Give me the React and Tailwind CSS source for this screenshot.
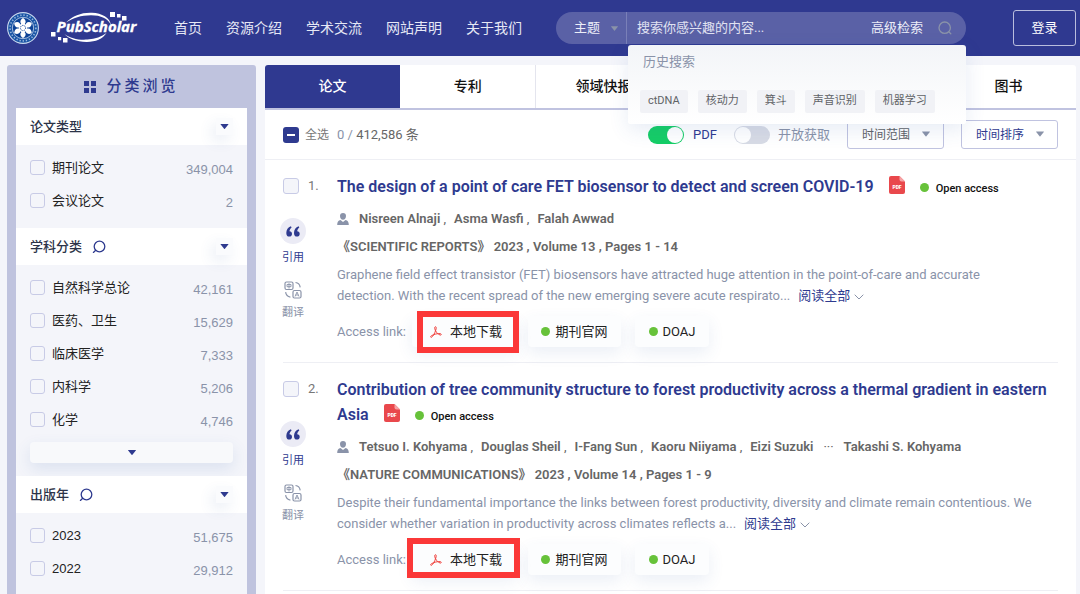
import React from "react";

const NAV = ["首页", "资源介绍", "学术交流", "网站声明", "关于我们"];
const HISTORY = ["ctDNA", "核动力", "箕斗", "声音识别", "机器学习"];

const SECTIONS = [
  { title: "论文类型", items: [["期刊论文", "349,004"], ["会议论文", "2"]] },
  {
    title: "学科分类",
    search: true,
    more: true,
    items: [
      ["自然科学总论", "42,161"],
      ["医药、卫生", "15,629"],
      ["临床医学", "7,333"],
      ["内科学", "5,206"],
      ["化学", "4,746"],
    ],
  },
  { title: "出版年", search: true, items: [["2023", "51,675"], ["2022", "29,912"]] },
];

const PAPERS = [
  {
    title: "The design of a point of care FET biosensor to detect and screen COVID-19",
    authors: ["Nisreen Alnaji", "Asma Wasfi", "Falah Awwad"],
    journal: "《SCIENTIFIC REPORTS》 2023 , Volume 13 , Pages 1 - 14",
    abstract:
      "Graphene field effect transistor (FET) biosensors have attracted huge attention in the point-of-care and accurate detection. With the recent spread of the new emerging severe acute respirato...",
    mark: "-top-[5px] -bottom-[6px] left-[5px] -right-[2px]",
  },
  {
    title:
      "Contribution of tree community structure to forest productivity across a thermal gradient in eastern Asia",
    authors: ["Tetsuo I. Kohyama", "Douglas Sheil", "I-Fang Sun", "Kaoru Niiyama", "Eizi Suzuki"],
    last: "Takashi S. Kohyama",
    journal: "《NATURE COMMUNICATIONS》 2023 , Volume 14 , Pages 1 - 9",
    abstract:
      "Despite their fundamental importance the links between forest productivity, diversity and climate remain contentious. We consider whether variation in productivity across climates reflects a...",
    mark: "-top-[6px] -bottom-[3px] -left-[5px] -right-[3px]",
  },
];

function Caret({ className }) {
  return (
    <svg viewBox="0 0 8 5" className={className} fill="currentColor" aria-hidden="true">
      <path d="M.4 0h7.2q.5 0 .2.4L4.4 4.7q-.4.5-.8 0L.2.4Q-.1 0 .4 0z" />
    </svg>
  );
}

function Emblem() {
  return (
    <svg viewBox="0 0 32 32" className="size-8 shrink-0" aria-hidden="true">
      <circle cx="16" cy="16" r="15.4" fill="#1a55a5" stroke="#c9d8ee" strokeWidth="1.1" />
      <circle cx="16" cy="16" r="12.9" fill="none" stroke="#9db9df" strokeWidth="1.6" strokeDasharray="1.3 1.9" />
      <circle cx="16" cy="16" r="10.7" fill="#0c4296" stroke="#e8f0fa" strokeWidth="0.7" />
      {[0, 60, 120, 180, 240, 300].map((a) => (
        <path
          key={a}
          transform={`rotate(${a} 16 16)`}
          d="M16 13C12.600 11.600 12.400 8 16 5.900c3.600 2.100 3.400 5.700 0 7.100z"
          fill="#fff"
        />
      ))}
      <circle cx="16" cy="16" r="4.400" fill="#fff" />
      <circle cx="16" cy="16" r="2.600" fill="none" stroke="#0c4296" strokeWidth="1" strokeDasharray="1 .8" />
    </svg>
  );
}

function Wordmark() {
  return (
    <svg viewBox="0 0 88 34" className="h-[34px] w-[88px] shrink-0" role="img" aria-label="PubScholar">
      <g fill="#fff">
        <path d="M15 11.500C22 4.500 31 1.200 41 1.700c10 .5 18 5 19 12.300C57 7.500 50 4.200 40 4.200 30 4.200 22 7 15 11.500z" />
        <path d="M13.500 23c6 4.600 14 6.200 23 5.600 8-.6 14-2.800 19-6.600-4 6-11 9-20 8.900-10-.2-18-3-22-7.900z" />
        <path d="M59 1h5v5h-5zM66 3h3.500v3.500H66zM71 5h4.500v4.500H71zM0 21h4.500v4.500H0zM7 26h3.200v3.200H7zM12 27h4.500v4.500H12z" />
      </g>
      <text
        x="5.500"
        y="20.500"
        fontFamily="Open Sans, Noto Sans, sans-serif"
        fontSize="15"
        fontWeight="700"
        fontStyle="italic"
        fill="#fff"
        stroke="#fff"
        strokeWidth="0.3"
      >
        PubScholar
      </text>
    </svg>
  );
}

function Lens({ className }) {
  return (
    <svg viewBox="0 0 14 14" className={className} fill="none" stroke="currentColor" strokeWidth="1.300" strokeLinecap="round" aria-hidden="true">
      <circle cx="7.500" cy="6.500" r="5.300" />
      <path d="M3.700 10.300L1.400 12.400" />
    </svg>
  );
}

function TranslateIcon() {
  return (
    <svg viewBox="0 0 18 18" className="size-[18px]" fill="none" stroke="currentColor" strokeWidth="1.200" aria-hidden="true">
      <rect x="1" y="1" width="8" height="7.500" rx="1.500" />
      <path d="M3 3.500h4v2.200H3zM5 2.200v5.300" strokeWidth=".9" />
      <rect x="9" y="9.500" width="8" height="7.500" rx="1.500" />
      <path d="M11 15.500l2-4.500 2 4.500M11.700 14h2.600" strokeWidth=".9" />
      <path d="M11.500 1.500c2.600.3 4.300 2 4.700 4.800M1.600 11.200c.4 2.800 2 4.500 4.800 4.900" />
    </svg>
  );
}

function PdfBadge() {
  return (
    <svg viewBox="0 0 16 18" className="mr-[15px] ml-[15px] inline-block h-[18px] w-4 align-[-2px]" role="img" aria-label="PDF">
      <path d="M2 0h8.500L16 5.500V16q0 2-2 2H2q-2 0-2-2V2Q0 0 2 0z" fill="#e9484c" />
      <path d="M10.500 0v3.500q0 2 2 2H16z" fill="#f6a3a5" />
      <text x="8" y="12.500" textAnchor="middle" fontFamily="Roboto, sans-serif" fontSize="5" fontWeight="900" fill="#fff">
        PDF
      </text>
    </svg>
  );
}

function AcrobatIcon() {
  return (
    <svg viewBox="0 0 12 12" className="size-3" fill="none" stroke="#f0433f" strokeWidth="1" strokeLinejoin="round" aria-hidden="true">
      <path d="M5.200.8c1.100-.5 1.300 1 .6 3.200C4.900 6.900 3 10.600 1.500 11.300c-.9.300-1.200-.7-.3-1.400C3 8.500 8.500 7 10.600 7.700c1.300.6.600 1.700-.6 1.300C7.500 8.100 5 5 4.700 2.300c-.1-.8.100-1.300.5-1.500z" />
    </svg>
  );
}

function Section({ title, search, more, items }) {
  return (
    <section>
      <div className="flex h-[37px] items-center bg-white pl-3.5 pr-3.5">
        <h3 className="text-[13px] font-medium text-[#2c3348]">{title}</h3>
        {search && (
          <button type="button" aria-label={`搜索${title}`} className="ml-2.5 text-[#2e3a8f]">
            <Lens className="size-3.5" />
          </button>
        )}
        <button
          type="button"
          aria-label={`收起${title}`}
          className="ml-auto flex size-[17px] items-center justify-center bg-[#fafbfd] text-[#2e3a8f] shadow-[-4px_6px_14px_rgba(55,99,170,0.1)]"
        >
          <Caret className="h-[5px] w-[9px]" />
        </button>
      </div>
      <div className={more ? "px-3.5 pt-1.5 pb-[13px]" : "px-3.5 pt-1.5 pb-[11px]"}>
        <ul>
          {items.map(([label, count]) => (
            <li key={label} className="flex h-[33px] items-center">
              <label className="flex items-center gap-[7px] text-[13px] text-[#222]">
                <input type="checkbox" className="size-[15px] appearance-none rounded-[3px] border border-[#c8cbe6] bg-[#f4f5fa]" />
                {label}
              </label>
              <span className="ml-auto pt-1 text-[13px] text-[#8a93a9]">{count}</span>
            </li>
          ))}
        </ul>
        {more && (
          <button
            type="button"
            aria-label="展开更多"
            className="mt-1.5 flex h-[21px] w-full items-center justify-center rounded-sm bg-[#f8f9fb] text-[#2e3a8f] shadow-[0_6px_16px_rgba(55,99,170,0.13)]"
          >
            <Caret className="h-[5px] w-2" />
          </button>
        )}
      </div>
    </section>
  );
}

function AccessLink({ children, className }) {
  return (
    <a
      href="#access"
      className={
        "flex h-[31px] items-center rounded-sm bg-[#fcfdfe] text-[13px] text-[#222] shadow-[0_6px_16px_rgba(55,99,170,0.1)] " +
        className
      }
    >
      {children}
    </a>
  );
}

function Dot() {
  return <span className="inline-block size-[9px] shrink-0 rounded-full bg-[#67c23a]" />;
}

function Paper({ index, title, authors, last, journal, abstract, mark }) {
  return (
    <li className="mx-[18px] flex border-b border-[#eeeff4] pt-3.5 pb-[15px]">
      <div className="w-[54px] shrink-0">
        <label className="flex h-6 items-center gap-[9px] text-[13px] text-[#777]">
          <input type="checkbox" className="size-4 appearance-none rounded-[3px] border border-[#c8cbe6] bg-[#f4f5fa]" />
          {index}.
        </label>
        <div className="mt-5 flex w-5 flex-col items-center text-[11px] whitespace-nowrap">
          <button type="button" className="flex flex-col items-center text-[#2e3a8f]">
            <span className="flex size-[26px] items-center justify-center rounded-full bg-[#ebebf5]">
              <svg viewBox="0 0 14 11" className="h-[11px] w-3.5" fill="currentColor" aria-hidden="true">
                <path d="M4.900.2C2 1.300.3 3.600.3 6.900c0 2.300 1.100 3.700 2.900 3.700 1.600 0 2.800-1.100 2.800-2.700 0-1.500-1-2.500-2.500-2.600.1-1.700.9-3 2.100-3.900zM12.600.2C9.700 1.300 8 3.600 8 6.900c0 2.300 1.100 3.700 2.900 3.700 1.600 0 2.800-1.100 2.800-2.700 0-1.500-1-2.500-2.500-2.600.1-1.700.9-3 2.100-3.900z" />
              </svg>
            </span>
            <span className="mt-[5px] leading-[18px]">引用</span>
          </button>
          <button type="button" className="mt-3.5 flex flex-col items-center text-[#8a93a9]">
            <TranslateIcon />
            <span className="mt-[5px] leading-[18px]">翻译</span>
          </button>
        </div>
      </div>
      <div className="min-w-0 flex-1">
        <h2 className="text-[16px] leading-[25px] font-semibold text-[#2e3a8f]">
          <a href="#paper">{title}</a>
          <span className="whitespace-nowrap">
            <PdfBadge />
            <Dot />
            <span className="ml-[7px] text-[11px] font-medium text-[#111]">Open access</span>
          </span>
        </h2>
        <p className="mt-2 flex h-5 items-center text-[13px] font-semibold text-[#666]">
          <svg viewBox="0 0 12 12" className="mr-2.5 size-3" fill="#8a93a9" aria-hidden="true">
            <path d="M6 0a3 3 0 0 1 3 3c0 2-1.300 3.800-3 3.800S3 5 3 3a3 3 0 0 1 3-3zM3.500 7L6 9l2.500-2c2.200.6 3.300 1.700 3.300 5H.2c0-3.300 1.100-4.400 3.300-5z" />
          </svg>
          {authors.map((a, i) => (
            <span key={a} className="whitespace-pre">
              {a}
              {i < authors.length - 1 && <span className="mr-2 font-normal"> ,</span>}
            </span>
          ))}
          {last && (
            <>
              <span className="mx-2.5 font-normal">···</span>
              <span>{last}</span>
            </>
          )}
        </p>
        <p className="mt-2 h-5 text-[13px] leading-5 font-semibold text-[#666]">{journal}</p>
        <p className="mt-[7px] pr-5 text-[13px] leading-[21px] text-[#8a93a9]">
          {abstract}
          <button type="button" className="ml-2 text-[13px] leading-4 text-[#2e3a8f]">
            阅读全部
            <svg viewBox="0 0 10 6" className="ml-1 inline-block h-1.5 w-2.5" fill="none" stroke="#8a93a9" aria-hidden="true">
              <path d="M.7.7L5 5 9.300.7" />
            </svg>
          </button>
        </p>
        <div className="mt-2.5 flex items-center">
          <span className="w-[75px] text-[13px] text-[#8a93a9]">Access link:</span>
          <div className="relative">
            <AccessLink className="w-[105px] gap-2 pl-[18px]">
              <AcrobatIcon />
              本地下载
            </AccessLink>
            <span className={"pointer-events-none absolute border-[6px] border-[#fb3838] " + mark} />
          </div>
          <AccessLink className="ml-[11px] w-[93px] justify-center gap-[5px]">
            <Dot />
            期刊官网
          </AccessLink>
          <AccessLink className="ml-3.5 w-[74px] justify-center gap-[5px]">
            <Dot />
            DOAJ
          </AccessLink>
        </div>
      </div>
    </li>
  );
}

function FilterSelect({ label, color }) {
  return (
    <div className="relative">
      <select
        aria-label={label}
        className={
          "h-[29px] w-[97px] appearance-none rounded-[3px] border border-[#c0c3e0] bg-white pl-3.5 text-[12px] " + color
        }
      >
        <option>{label}</option>
      </select>
      <Caret className="pointer-events-none absolute top-[11px] right-3.5 h-1.5 w-2 text-[#8a93a9]" />
    </div>
  );
}

const TOGGLE =
  "relative h-[18px] w-9 shrink-0 appearance-none rounded-full bg-[#d8dbe5] before:absolute before:top-px before:left-px before:size-4 before:rounded-full before:bg-white checked:bg-[#15ce66] checked:before:left-[19px]";

export default function App() {
  return (
    <div className="flex min-h-screen flex-col bg-[#f4f5fa] font-[Roboto,'Noto_Sans_CJK_SC',sans-serif]">
      <header className="flex h-14 items-center bg-[#2f3990] pr-1 pl-[7px] text-white">
        <Emblem />
        <a href="#home" className="ml-3">
          <Wordmark />
        </a>
        <nav className="ml-[35px] flex gap-6 text-[14px] whitespace-nowrap text-[#e6e8f5]">
          {NAV.map((n) => (
            <a key={n} href="#nav">
              {n}
            </a>
          ))}
        </nav>
        <div className="relative ml-auto flex h-8 w-[410px] items-center rounded-full bg-[#5a61a6] text-[13px] text-[#eceef8]">
          <div className="relative flex h-full w-[71px] items-center border-r border-[#7a80b8]">
            <select aria-label="检索字段" className="h-full w-full appearance-none bg-transparent pl-[18px]">
              <option>主题</option>
            </select>
            <Caret className="pointer-events-none absolute top-3.5 right-2 h-[5px] w-[7px] text-[#8a93a9]" />
          </div>
          <input
            type="text"
            aria-label="搜索"
            placeholder="搜索你感兴趣的内容..."
            className="min-w-0 flex-1 bg-transparent pl-2.5 outline-none placeholder:text-[#e0e2f2]"
          />
          <a href="#advanced" className="mr-[15px]">
            高级检索
          </a>
          <button type="submit" aria-label="搜索" className="mr-3.5 text-[#8a93a9]">
            <svg viewBox="0 0 14 14" className="size-3.5" fill="none" stroke="currentColor" strokeWidth="1.300" strokeLinecap="round">
              <circle cx="6.700" cy="6.700" r="5.700" />
              <path d="M10.900 10.900l1.900 1.900" />
            </svg>
          </button>
          <div className="absolute top-[33px] right-0 left-[72px] z-10 rounded-[3px] bg-linear-to-b from-[#f3f5f8] to-white px-3 pb-[11px] shadow-[0_6px_20px_rgba(55,99,170,0.12)]">
            <h4 className="pl-[3px] text-[13px] leading-[33px] text-[#8a93a9]">历史搜索</h4>
            <ul className="mt-3 flex gap-2.5 text-[11px] whitespace-nowrap text-[#606266]">
              {HISTORY.map((h) => (
                <li key={h}>
                  <button type="button" className="block h-[23px] rounded-xs bg-[#f1f2f6] px-2">
                    {h}
                  </button>
                </li>
              ))}
            </ul>
          </div>
        </div>
        <button type="button" className="ml-[47px] h-9 w-[63px] rounded-[3px] border border-[#b9bddd] text-[13px]">
          登录
        </button>
      </header>

      <div className="flex flex-1 gap-[9px] pt-[9px] pr-1 pl-[7px]">
        <aside className="w-[249px] shrink-0 rounded-t-[3px] bg-[#bfc3de] px-[9px] font-['Liberation_Sans','Noto_Sans_CJK_SC',sans-serif]">
          <h2 className="flex h-[43px] items-center justify-center gap-2.5 text-[15px] font-medium text-[#2e3a8f]">
            <svg viewBox="0 0 12 12" className="size-3" fill="currentColor" aria-hidden="true">
              <path d="M0 0h5v5H0zM7 0h5v5H7zM0 7h5v5H0zM7 7h5v5H7z" />
            </svg>
            <span className="tracking-[3px]">分类浏览</span>
          </h2>
          <div className="h-[calc(100%-43px)] bg-[#f4f5fa]">
            {SECTIONS.map((s) => (
              <Section key={s.title} {...s} />
            ))}
          </div>
        </aside>

        <main className="min-w-0 flex-1 rounded-t-[3px] bg-white">
          <div className="grid h-[45px] grid-cols-6 border-b-2 border-[#c0c3e0] text-[14px] font-medium text-[#111]">
            <button type="button" className="rounded-tl-[3px] bg-[#2f3990] text-white">
              论文
            </button>
            <button type="button">专利</button>
            <button type="button" className="border-l border-[#e4e5ee]">
              领域快报
            </button>
            <button type="button" className="col-start-6">
              图书
            </button>
          </div>

          <div className="flex h-[50px] items-center border-b border-[#eeeff4] px-[18px]">
            <label className="flex items-center gap-1.5 text-[12px] text-[#777]">
              <input
                type="checkbox"
                className="relative size-4 appearance-none rounded-[3px] bg-[#2e3a8f] before:absolute before:top-[7px] before:left-1 before:h-0.5 before:w-2 before:bg-white"
              />
              全选
            </label>
            <p className="ml-2 text-[13px] text-[#666]">
              <span className="text-[#8a93a9]">0 / </span>412,586 条
            </p>
            <label className="ml-auto flex items-center gap-[9px] text-[13px] text-[#2e3a8f]">
              <input type="checkbox" role="switch" defaultChecked className={TOGGLE} />
              PDF
            </label>
            <label className="ml-[17px] flex items-center gap-2 text-[13px] text-[#8a93a9]">
              <input type="checkbox" role="switch" className={TOGGLE} />
              开放获取
            </label>
            <div className="ml-[17px] flex gap-[17px]">
              <FilterSelect label="时间范围" color="text-[#606266]" />
              <FilterSelect label="时间排序" color="text-[#2e3a8f]" />
            </div>
          </div>

          <ol>
            {PAPERS.map((p, i) => (
              <Paper key={p.title} index={i + 1} {...p} />
            ))}
          </ol>
        </main>
      </div>
    </div>
  );
}
